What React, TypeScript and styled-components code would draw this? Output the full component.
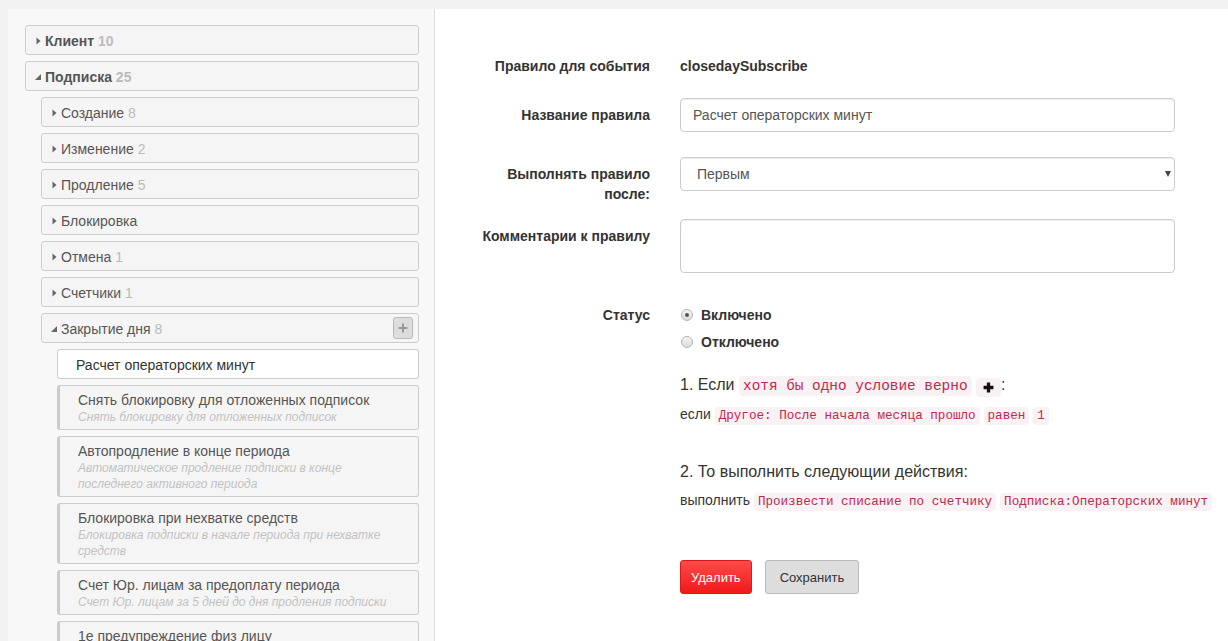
import React from 'react';
import styled, { createGlobalStyle } from 'styled-components';

const Global = createGlobalStyle`
  html, body { margin: 0; padding: 0; }
  body {
    font-family: "Liberation Sans", Arial, sans-serif;
    font-size: 14px;
    color: #333;
    background: #f2f2f2;
  }
  * { box-sizing: border-box; }
`;

const Page = styled.div`
  height: 641px;
  padding: 9px 0 0 8px;
  display: flex;
  overflow: hidden;
`;

const Sidebar = styled.aside`
  width: 427px;
  flex: none;
  background: #f8f8f8;
  border-right: 1px solid #ddd;
  padding: 16px 15px 0 17px;
  overflow: hidden;
`;

const Group = styled.div<{ $indent: number }>`
  margin-left: ${(p) => p.$indent}px;
`;

const Node = styled.div`
  height: 30px;
  margin-bottom: 6px;
  border: 1px solid #ccc;
  border-radius: 3px;
  background: #f5f5f5;
  display: flex;
  align-items: center;
  padding: 1px 5px 0 8px;
  color: #555;
  font-size: 14px;
`;

const Caret = styled.span`
  width: 8px;
  height: 8px;
  margin-right: 3px;
  display: inline-flex;
  align-items: center;
  justify-content: center;
  flex: none;
`;

const NodeLabel = styled.span<{ $bold?: boolean }>`
  font-weight: ${(p) => (p.$bold ? 700 : 400)};
  flex: 1;
`;

const Count = styled.span`
  color: #bbb;
`;

const AddBtn = styled.span`
  width: 20px;
  height: 22px;
  margin-top: -1px;
  border: 1px solid #bbb;
  border-radius: 3px;
  background: #ddd;
  display: inline-flex;
  align-items: center;
  justify-content: center;
`;

const ActiveLeaf = styled.div`
  height: 30px;
  margin-bottom: 6px;
  border: 1px solid #ccc;
  border-radius: 3px;
  background: #fff;
  display: flex;
  align-items: center;
  padding: 1px 0 0 18px;
  color: #333;
  font-size: 14px;
`;

const Leaf = styled.div`
  margin-bottom: 6px;
  border: 1px solid #ccc;
  border-left: 3px solid #ccc;
  border-radius: 3px;
  background: #f5f5f5;
  padding: 5px 20px 4px 18px;
`;

const LeafTitle = styled.div`
  font-size: 14px;
  line-height: 18px;
  color: #555;
`;

const LeafDesc = styled.div`
  font-size: 12px;
  line-height: 16px;
  font-style: italic;
  color: #c2c2c2;
`;

const Main = styled.main`
  flex: 1;
  background: #fff;
  padding: 40px 0 0 35px;
`;

const Row = styled.div<{ $mb: number }>`
  display: flex;
  margin-bottom: ${(p) => p.$mb}px;
`;

const Label = styled.div`
  width: 180px;
  flex: none;
  text-align: right;
  font-weight: 700;
  color: #333;
  padding-top: 7px;
  line-height: 20px;
`;

const Control = styled.div`
  width: 495px;
  margin-left: 30px;
  flex: none;
  position: relative;
`;

const Static = styled.div`
  padding: 7px 0;
  line-height: 20px;
  font-weight: 700;
  color: #333;
`;

const TextInput = styled.input`
  display: block;
  width: 100%;
  height: 34px;
  padding: 6px 12px;
  font: inherit;
  font-size: 14px;
  color: #555;
  border: 1px solid #ccc;
  border-radius: 4px;
  box-shadow: inset 0 1px 1px rgba(0, 0, 0, 0.075);
  outline: none;
`;

const Select = styled.select`
  display: block;
  width: 100%;
  height: 34px;
  padding: 6px 12px;
  font: inherit;
  font-size: 14px;
  color: #555;
  background: #fff;
  border: 1px solid #ccc;
  border-radius: 4px;
  box-shadow: inset 0 1px 1px rgba(0, 0, 0, 0.075);
  appearance: none;
  outline: none;
`;

const SelectArrow = styled.span`
  position: absolute;
  right: 4px;
  top: 14px;
  width: 0;
  height: 0;
  border-left: 3.5px solid transparent;
  border-right: 3.5px solid transparent;
  border-top: 6px solid #444;
  pointer-events: none;
`;

const TextArea = styled.textarea`
  display: block;
  width: 100%;
  height: 54px;
  padding: 6px 12px;
  font: inherit;
  color: #555;
  border: 1px solid #ccc;
  border-radius: 4px;
  box-shadow: inset 0 1px 1px rgba(0, 0, 0, 0.075);
  resize: none;
  outline: none;
`;

const RadioLine = styled.label`
  display: flex;
  align-items: center;
  padding-top: 7px;
  height: 27px;
  font-weight: 700;
  color: #333;
  line-height: 20px;
`;

const RadioDot = styled.span<{ $checked?: boolean }>`
  width: 12px;
  height: 12px;
  margin: 0 8px 0 1px;
  border-radius: 50%;
  border: 1px solid #b5b5b5;
  background: linear-gradient(#f4f4f4, #dcdcdc);
  display: inline-flex;
  align-items: center;
  justify-content: center;
  &::after {
    content: '';
    width: 4px;
    height: 4px;
    border-radius: 50%;
    background: ${(p) => (p.$checked ? '#555' : 'transparent')};
  }
`;

const Section = styled.div<{ $mt: number }>`
  margin-left: 210px;
  margin-top: ${(p) => p.$mt}px;
`;

const Heading = styled.div`
  font-size: 16px;
  line-height: 24px;
  color: #333;
`;

const Line = styled.div`
  font-size: 14px;
  line-height: 22px;
  color: #333;
  white-space: nowrap;
`;

const Code = styled.code`
  font-family: "Liberation Mono", "DejaVu Sans Mono", monospace;
  font-size: 90%;
  padding: 2px 4px;
  color: #c7254e;
  background: #f9f2f4;
  border-radius: 4px;
`;

const PlusCode = styled.code`
  display: inline-flex;
  vertical-align: -3px;
  align-items: center;
  justify-content: center;
  width: 25px;
  height: 19px;
  background: #f9f2f4;
  border-radius: 4px;
`;

const Buttons = styled.div`
  display: flex;
  gap: 13px;
`;

const Button = styled.button<{ $danger?: boolean }>`
  height: 34px;
  padding: 0 ${(p) => (p.$danger ? 10 : 14)}px;
  font: inherit;
  font-size: 13px;
  border-radius: 3px;
  border: 1px solid ${(p) => (p.$danger ? '#d91a1a' : '#bbb')};
  color: ${(p) => (p.$danger ? '#fff' : '#333')};
  background: ${(p) => (p.$danger ? 'linear-gradient(#ff4a4a, #f01a1a)' : '#dddddd')};
`;

const CaretRight = () => (
  <Caret>
    <svg width="5" height="8" viewBox="0 0 5 8">
      <path d="M0.5 0.5 L4.5 4 L0.5 7.5 Z" fill="#666" />
    </svg>
  </Caret>
);

const CaretDown = () => (
  <Caret>
    <svg width="6" height="6" viewBox="0 0 6 6">
      <path d="M6 0 L6 6 L0 6 Z" fill="#666" />
    </svg>
  </Caret>
);

const PlusIcon = ({ color, size, weight }: { color: string; size: number; weight: number }) => (
  <svg width={size} height={size} viewBox="0 0 10 10">
    <path d="M5 0.5 V9.5 M0.5 5 H9.5" stroke={color} strokeWidth={weight} />
  </svg>
);

const subs: [string, number | null][] = [
  ['Создание', 8],
  ['Изменение', 2],
  ['Продление', 5],
  ['Блокировка', null],
  ['Отмена', 1],
  ['Счетчики', 1],
];

const leaves: [string, string][] = [
  ['Снять блокировку для отложенных подписок', 'Снять блокировку для отложенных подписок'],
  ['Автопродление в конце периода', 'Автоматическое продление подписки в конце последнего активного периода'],
  ['Блокировка при нехватке средств', 'Блокировка подписки в начале периода при нехватке средств'],
  ['Счет Юр. лицам за предоплату периода', 'Счет Юр. лицам за 5 дней до дня продления подписки'],
  ['1е предупреждение физ лицу', 'Предупреждение физ лицу о нехватке средств'],
];

export default function App() {
  return (
    <>
      <Global />
      <Page>
        <Sidebar>
          <Node>
            <CaretRight />
            <NodeLabel $bold>
              Клиент <Count>10</Count>
            </NodeLabel>
          </Node>
          <Node>
            <CaretDown />
            <NodeLabel $bold>
              Подписка <Count>25</Count>
            </NodeLabel>
          </Node>
          <Group $indent={16}>
            {subs.map(([name, n]) => (
              <Node key={name}>
                <CaretRight />
                <NodeLabel>
                  {name} {n !== null && <Count>{n}</Count>}
                </NodeLabel>
              </Node>
            ))}
            <Node>
              <CaretDown />
              <NodeLabel>
                Закрытие дня <Count>8</Count>
              </NodeLabel>
              <AddBtn>
                <PlusIcon color="#999" size={10} weight={2} />
              </AddBtn>
            </Node>
            <Group $indent={16}>
              <ActiveLeaf>Расчет операторских минут</ActiveLeaf>
              {leaves.map(([t, d]) => (
                <Leaf key={t}>
                  <LeafTitle>{t}</LeafTitle>
                  <LeafDesc>{d}</LeafDesc>
                </Leaf>
              ))}
            </Group>
          </Group>
        </Sidebar>
        <Main>
          <Row $mb={15}>
            <Label>Правило для события</Label>
            <Control>
              <Static>closedaySubscribe</Static>
            </Control>
          </Row>
          <Row $mb={25}>
            <Label>Название правила</Label>
            <Control>
              <TextInput defaultValue="Расчет операторских минут" />
            </Control>
          </Row>
          <Row $mb={15}>
            <Label>Выполнять правило после:</Label>
            <Control>
              <Select defaultValue="first">
                <option value="first">&nbsp;Первым</option>
              </Select>
              <SelectArrow />
            </Control>
          </Row>
          <Row $mb={25}>
            <Label>Комментарии к правилу</Label>
            <Control>
              <TextArea />
            </Control>
          </Row>
          <Row $mb={0}>
            <Label>Статус</Label>
            <Control>
              <RadioLine>
                <RadioDot $checked />
                Включено
              </RadioLine>
              <RadioLine>
                <RadioDot />
                Отключено
              </RadioLine>
            </Control>
          </Row>
          <Section $mt={21}>
            <Heading>
              1. Если <Code>хотя бы одно условие верно</Code>{' '}
              <PlusCode>
                <PlusIcon color="#111" size={11} weight={3} />
              </PlusCode>
              :
            </Heading>
          </Section>
          <Section $mt={5}>
            <Line>
              если <Code>Другое: После начала месяца прошло</Code> <Code>равен</Code> <Code>1</Code>
            </Line>
          </Section>
          <Section $mt={33}>
            <Heading>2. То выполнить следующии действия:</Heading>
          </Section>
          <Section $mt={5}>
            <Line>
              выполнить <Code>Произвести списание по счетчику</Code> <Code>Подписка:Операторских минут</Code>
            </Line>
          </Section>
          <Section $mt={47}>
            <Buttons>
              <Button $danger>Удалить</Button>
              <Button>Сохранить</Button>
            </Buttons>
          </Section>
        </Main>
      </Page>
    </>
  );
}
